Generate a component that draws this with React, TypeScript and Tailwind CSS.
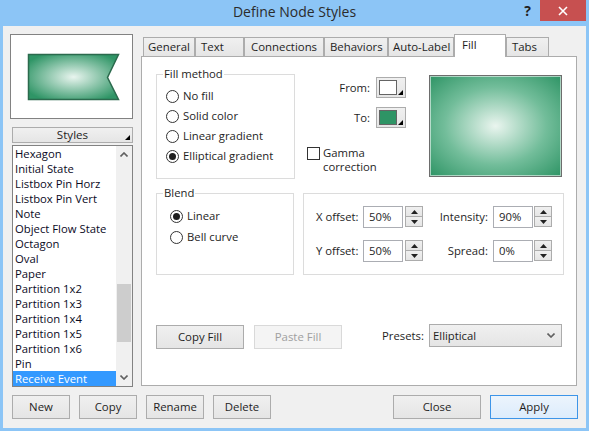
import React from "react";

const items = [
  "Hexagon",
  "Initial State",
  "Listbox Pin Horz",
  "Listbox Pin Vert",
  "Note",
  "Object Flow State",
  "Octagon",
  "Oval",
  "Paper",
  "Partition 1x2",
  "Partition 1x3",
  "Partition 1x4",
  "Partition 1x5",
  "Partition 1x6",
  "Pin",
  "Receive Event",
];

function Corner() {
  return (
    <svg width="5" height="5" viewBox="0 0 5 5" className="absolute right-[2px] bottom-[2px]">
      <polygon points="5,0 5,5 0,5" fill="#000" />
    </svg>
  );
}

function Radio({ checked, label }: { checked?: boolean; label: string }) {
  return (
    <div className="flex items-center h-[20px]">
      <div className="w-[13px] h-[13px] rounded-full border border-[#333333] bg-white flex items-center justify-center">
        {checked && <div className="w-[7px] h-[7px] rounded-full bg-[#1e1e1e]" />}
      </div>
      <span className="ml-[4px] text-[#1e1e1e] leading-[16px]">{label}</span>
    </div>
  );
}

function Tri({ up }: { up?: boolean }) {
  return (
    <svg width="7" height="4" viewBox="0 0 7 4">
      {up ? <polygon points="0,4 7,4 3.5,0" fill="#222" /> : <polygon points="0,0 7,0 3.5,4" fill="#222" />}
    </svg>
  );
}

function Spin() {
  return (
    <div className="flex flex-col w-[18px] h-[22px]">
      <div className="h-[11px] border border-[#acacac] bg-linear-to-b from-[#f0f0f0] to-[#e5e5e5] flex items-center justify-center">
        <Tri up />
      </div>
      <div className="h-[11px] -mt-px border border-[#acacac] bg-linear-to-b from-[#f0f0f0] to-[#e5e5e5] flex items-center justify-center">
        <Tri />
      </div>
    </div>
  );
}

function Chevron({ up }: { up?: boolean }) {
  return (
    <svg width="8" height="5" viewBox="0 0 8 5">
      <polyline
        points={up ? "0.5,4.5 4,1 7.5,4.5" : "0.5,0.5 4,4 7.5,0.5"}
        fill="none"
        stroke="#606060"
        strokeWidth="1.6"
      />
    </svg>
  );
}

const btn =
  "h-[24px] flex items-center justify-center border border-[#acacac] bg-linear-to-b from-[#f0f0f0] to-[#e5e5e5] text-[#1e1e1e] text-[11.4px]";

const tab =
  "h-[19px] border border-b-0 border-[#acacac] bg-linear-to-b from-[#f0f0f0] to-[#e5e5e5] flex items-center whitespace-nowrap overflow-hidden";

export default function App() {
  return (
    <div className="w-[589px] h-[431px] bg-[#8cc5f6] flex flex-col overflow-hidden font-['Open_Sans','Noto_Sans',sans-serif] text-[11.3px] leading-none text-black">
      {/* Title bar */}
      <div className="h-[26px] grid grid-cols-[1fr_auto_1fr]">
        <div />
        <div className="pt-[5px] text-[14px] text-[#2b2b2b]">Define Node Styles</div>
        <div className="flex justify-end items-start">
          <div className="mt-[4px] mr-[9px] text-[14px] font-bold text-[#222]">?</div>
          <div className="w-[46px] h-[21px] mr-[3px] bg-[#c75050] flex items-center justify-center">
            <svg width="10" height="10" viewBox="0 0 10 10">
              <path d="M1 1 L9 9 M9 1 L1 9" stroke="#fff" strokeWidth="1.6" />
            </svg>
          </div>
        </div>
      </div>

      {/* Client area */}
      <div className="mx-[3px] mb-[3px] flex-1 bg-[#f0f0f0] flex flex-col pt-[8px] px-[7px]">
        <div className="flex items-start">
          {/* Left column */}
          <div className="w-[123px] flex flex-col">
            <div className="h-[85px] border border-[#828282] bg-white">
              <svg width="121" height="83" viewBox="0 0 121 83">
                <defs>
                  <radialGradient id="sg" cx="0.5" cy="0.5" r="0.6">
                    <stop offset="0" stopColor="#e9f5ef" />
                    <stop offset="1" stopColor="#2f9566" />
                  </radialGradient>
                </defs>
                <polygon
                  points="17.5,19.5 107.5,19.5 96.5,42.5 107.5,64.5 17.5,64.5"
                  fill="url(#sg)"
                  stroke="#2b6a4d"
                  strokeWidth="1.5"
                />
              </svg>
            </div>
            <div className="relative mt-[8px] ml-[2px] w-[121px] h-[16px] border border-[#acacac] bg-linear-to-b from-[#f0f0f0] to-[#e5e5e5] flex items-center justify-center text-[11.6px] text-[#1e1e1e]">
              Styles
              <Corner />
            </div>
            <div className="mt-[2px] ml-[2px] w-[121px] h-[242px] border border-[#828282] bg-white flex">
              <div className="flex-1 flex flex-col">
                {items.map((it, i) => (
                  <div
                    key={it}
                    className={
                      i === items.length - 1
                        ? "h-[15px] leading-[15px] pl-[2px] bg-[#3399ff] text-white whitespace-nowrap"
                        : "h-[15px] leading-[15px] pl-[2px] text-[#0a0a1e] whitespace-nowrap"
                    }
                  >
                    {it}
                  </div>
                ))}
              </div>
              <div className="w-[16px] bg-[#f0f0f0] flex flex-col">
                <div className="h-[17px] flex items-center justify-center">
                  <Chevron up />
                </div>
                <div className="h-[121px]" />
                <div className="h-[58px] mx-[1px] bg-[#cdcdcd]" />
                <div className="flex-1" />
                <div className="h-[17px] flex items-center justify-center">
                  <Chevron />
                </div>
              </div>
            </div>
          </div>

          {/* Right column */}
          <div className="ml-[8px] w-[436px] flex flex-col">
            <div className="h-[22px] flex items-end pl-[2px] text-[11.4px] text-[#1e1e1e]">
              <div className={tab + " w-[52px] pl-[4px]"}>General</div>
              <div className={tab + " w-[49px] pl-[5px]"}>Text</div>
              <div className={tab + " w-[80px] pl-[6px]"}>Connections</div>
              <div className={tab + " w-[64px] pl-[5px]"}>Behaviors</div>
              <div className={tab + " w-[66px] pl-[4px]"}>Auto-Label</div>
              <div className="relative z-10 w-[52px] h-[23px] -mb-px border border-b-0 border-[#acacac] bg-white pl-[7px] pt-[4px] whitespace-nowrap">Fill</div>
              <div className={tab + " w-[43px] pl-[5px]"}>Tabs</div>
            </div>
            <div className="h-[330px] border border-[#acacac] bg-white pt-[9px] pl-[14px] text-[#1e1e1e]">
              {/* Row 1 */}
              <div className="flex items-start">
                <fieldset className="w-[139px] h-[113px] border border-[#dcdcdc]">
                  <legend className="ml-[6px] px-[1px] leading-[16px]">Fill method</legend>
                  <div className="pt-[4px] pl-[9px] flex flex-col">
                    <Radio label="No fill" />
                    <Radio label="Solid color" />
                    <Radio label="Linear gradient" />
                    <Radio checked label="Elliptical gradient" />
                  </div>
                </fieldset>
                <div className="ml-[12px] w-[99px] flex flex-col">
                  <div className="mt-[11px] h-[21px] flex items-center justify-end">
                    <span>From:</span>
                    <div className="relative ml-[6px] w-[30px] h-[21px] border border-[#acacac] bg-linear-to-b from-[#f0f0f0] to-[#e5e5e5] pl-[2px] pt-[2px]">
                      <div className="w-[18px] h-[15px] border border-[#646464] bg-white" />
                      <Corner />
                    </div>
                  </div>
                  <div className="mt-[9px] h-[21px] flex items-center justify-end">
                    <span>To:</span>
                    <div className="relative ml-[6px] w-[30px] h-[21px] border border-[#acacac] bg-linear-to-b from-[#f0f0f0] to-[#e5e5e5] pl-[2px] pt-[2px]">
                      <div className="w-[18px] h-[15px] border border-[#646464] bg-[#2e9465]" />
                      <Corner />
                    </div>
                  </div>
                  <div className="mt-[18px] flex items-start">
                    <div className="mt-[1px] w-[13px] h-[13px] border border-[#333333] bg-white" />
                    <div className="ml-[3px] flex flex-col">
                      <span className="h-[14px] leading-[14px]">Gamma</span>
                      <span className="h-[14px] leading-[14px]">correction</span>
                    </div>
                  </div>
                </div>
                <div className="ml-[23px] mt-[9px] w-[133px] h-[102px] border border-[#6d6d6d] shadow-[inset_0_0_0_1px_#ffffff90] bg-[radial-gradient(ellipse_at_center,#eaf5ef_0%,#72bd9a_55%,#2e9465_100%)]" />
              </div>

              {/* Row 2 */}
              <div className="mt-[6px] flex items-start">
                <fieldset className="w-[138px] h-[90px] border border-[#dcdcdc]">
                  <legend className="ml-[6px] px-[1px] leading-[16px]">Blend</legend>
                  <div className="pt-[5px] pl-[13px] flex flex-col">
                    <Radio checked label="Linear" />
                    <div className="h-[1px]" />
                    <Radio label="Bell curve" />
                  </div>
                </fieldset>
                <div className="ml-[9px] mt-[8px] w-[261px] h-[82px] border border-[#dcdcdc] pt-[12px] pl-[12px]">
                  <div className="flex items-center h-[22px]">
                    <span className="w-[47px] whitespace-nowrap">X offset:</span>
                    <div className="w-[40px] h-[22px] border border-[#abadb3] pl-[5px] flex items-center">50%</div>
                    <div className="ml-[2px]"><Spin /></div>
                    <span className="w-[65px] text-right">Intensity:</span>
                    <div className="ml-[5px] w-[40px] h-[22px] border border-[#abadb3] pl-[5px] flex items-center">90%</div>
                    <div className="ml-[1px]"><Spin /></div>
                  </div>
                  <div className="mt-[12px] flex items-center h-[22px]">
                    <span className="w-[47px] whitespace-nowrap">Y offset:</span>
                    <div className="w-[40px] h-[22px] border border-[#abadb3] pl-[5px] flex items-center">50%</div>
                    <div className="ml-[2px]"><Spin /></div>
                    <span className="w-[65px] text-right">Spread:</span>
                    <div className="ml-[5px] w-[40px] h-[22px] border border-[#abadb3] pl-[5px] flex items-center">0%</div>
                    <div className="ml-[1px]"><Spin /></div>
                  </div>
                </div>
              </div>

              {/* Row 3 */}
              <div className="mt-[50px] flex items-start">
                <div className={btn + " w-[88px]"}>Copy Fill</div>
                <div className="ml-[10px] w-[88px] h-[24px] flex items-center justify-center border border-[#d9d9d9] bg-[#f4f4f4] text-[#a0a0a0] text-[11.4px]">
                  Paste Fill
                </div>
                <span className="ml-[40px] w-[47px] mt-[5px]">Presets:</span>
                <div className="-mt-[1px] w-[133px] h-[23px] border border-[#acacac] bg-linear-to-b from-[#f0f0f0] to-[#e5e5e5] flex items-center pl-[3px] pr-[6px]">
                  <span className="flex-1">Elliptical</span>
                  <Chevron />
                </div>
              </div>
            </div>
          </div>
        </div>

        {/* Bottom buttons */}
        <div className="mt-[8px] flex items-start">
          <div className={btn + " ml-[2px] w-[58px]"}>New</div>
          <div className={btn + " ml-[9px] w-[58px]"}>Copy</div>
          <div className={btn + " ml-[9px] w-[58px]"}>Rename</div>
          <div className={btn + " ml-[9px] w-[58px]"}>Delete</div>
          <div className={btn + " ml-auto w-[88px]"}>Close</div>
          <div className="ml-[9px] mr-[1px] w-[88px] h-[24px] flex items-center justify-center border border-[#3d95e8] bg-linear-to-b from-[#ecf4fc] to-[#dcecfc] text-[#1e1e1e] text-[11.4px]">
            Apply
          </div>
        </div>
      </div>
    </div>
  );
}
